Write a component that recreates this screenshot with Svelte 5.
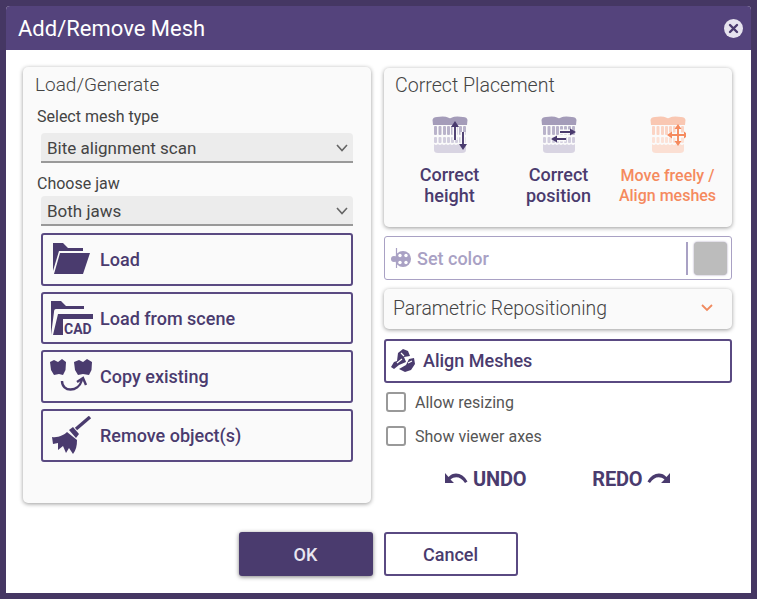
<script>
  const placements = [
    { lines: ['Correct', 'height'], kind: 'height' },
    { lines: ['Correct', 'position'], kind: 'position' },
    { lines: ['Move freely /', 'Align meshes'], kind: 'free' }
  ]
  const upperTeeth = [2, 6.500, 11, 15, 19, 23, 27, 31]
  const lowerGum = 'M2 28 Q4 30 6 28 Q8 30 10 28 Q12 30 14 28 Q16 30 18 28 Q20 30 22 28 Q24 30 26 28 Q28 30 30 28 Q32 30 34 28 L34 34 Q34 37 30 37 L6 37 Q2 37 2 34 Z'
  const arrows = {
    height: 'M23 24 V9 M31 16 V30',
    position: 'M19 16 H31 M25 23 H14',
    free: 'M19 19 H37 M28 10 V28'
  }
  const heads = {
    height: 'M23 5 L27 11 H19 Z M31 34 L27 28 H35 Z',
    position: 'M35 16 L29 12.500 V19.500 Z M10 23 L16 19.500 V26.500 Z',
    free: 'M28 8 L31.500 13 H24.500 Z M28 30 L31.500 25 H24.500 Z M17 19 L22 15.500 V22.500 Z M39 19 L34 15.500 V22.500 Z'
  }
</script>

{#snippet teeth(kind)}
  <svg class="teeth {kind}" width="36" height="38" viewBox="0 0 36 38">
    <path class="gum-top" d="M1 9 L0.500 4 Q1 1 5 1 Q13 0 16 1.500 Q18 3 20 1.500 Q23 0 31 1 Q35 1 35.500 4 L35 9 Z" />
    {#each upperTeeth as x}
      <rect class="tooth-top" {x} y="10" width="3" height="9" rx="1" />
      <rect class="tooth-low" {x} y="21" width="3" height="6" rx="1" />
    {/each}
    <path class="gum-low" d={lowerGum} />
    <path class="halo" d={arrows[kind]} />
    <path class="arrow" d={arrows[kind]} />
    <path class="head" d={heads[kind]} />
  </svg>
{/snippet}

<div class="dialog">
  <header class="title-bar">
    <h1>Add/Remove Mesh</h1>
    <button class="close" aria-label="Close">
      <svg width="19" height="19" viewBox="0 0 19 19">
        <circle cx="9.500" cy="9.500" r="9.500" fill="#e6e3ee" />
        <path d="M6 6 L13 13 M13 6 L6 13" stroke="#4a3b6e" stroke-width="2.400" stroke-linecap="round" />
      </svg>
    </button>
  </header>

  <div class="body">
    <div class="columns">
      <section class="card left">
        <h2>Load/Generate</h2>
        <div class="label first">Select mesh type</div>
        <div class="select">
          Bite alignment scan
          <svg width="12" height="8" viewBox="0 0 12 8"><path d="M1 1 L6 6.500 L11 1" fill="none" stroke="#666" stroke-width="1.600" /></svg>
        </div>
        <div class="label second">Choose jaw</div>
        <div class="select">
          Both jaws
          <svg width="12" height="8" viewBox="0 0 12 8"><path d="M1 1 L6 6.500 L11 1" fill="none" stroke="#666" stroke-width="1.600" /></svg>
        </div>

        <div class="actions">
          <button class="action">
            <span class="action-icon">
              <svg width="38" height="32" viewBox="0 0 38 32">
                <path d="M0 0 H10 L15 5 H30 V8 H6 L0 28 Z" fill="#4a3b6e" />
                <path d="M1 31 L7 10 H37 L30 31 Z" fill="#4a3b6e" />
              </svg>
            </span>
            Load
          </button>
          <button class="action">
            <span class="action-icon">
              <svg width="42" height="35" viewBox="0 0 42 35">
                <path d="M0 0 H10 L15 5 H33 V8 H5 Q3 8 3 11 L0 34 Z" fill="#4a3b6e" />
                <path d="M2 34 L7 13 H42 V18 H12 L12 34 Z" fill="#4a3b6e" />
                <text x="13" y="33" class="cad">CAD</text>
              </svg>
            </span>
            Load from scene
          </button>
          <button class="action">
            <span class="action-icon">
              <svg width="43" height="35" viewBox="0 0 43 35">
                <path d="M0 3 L4 1 L8 3 L12 0 L16 3 L15.500 11 L13 16 L9 15 L4 16 L1 11 Z" fill="#4a3b6e" />
                <path d="M24 3 L29 1 L33 3 L37 0 L42 3 L41.500 11 L39 16 L33 15 L28 16 L25 11 Z" fill="#4a3b6e" />
                <path d="M12 22 C12 33 28 34 32 21" fill="none" stroke="#4a3b6e" stroke-width="2.400" />
                <path d="M27 23 L33 19 L36 26" fill="none" stroke="#4a3b6e" stroke-width="2.400" />
              </svg>
            </span>
            Copy existing
          </button>
          <button class="action">
            <span class="action-icon">
              <svg width="40" height="38" viewBox="0 0 40 38">
                <path d="M24 13 L38 1" stroke="#4a3b6e" stroke-width="3.400" />
                <path d="M17 14 L21 11 L27 18 L24 22 Z" fill="#4a3b6e" />
                <path d="M15 16 L25 24 C25 30 24 34 21 38 L17 32 L14 37 L11 30 L6 34 L6 27 L1 28 L0 21 C6 22 12 19 15 16 Z" fill="#4a3b6e" />
              </svg>
            </span>
            Remove object(s)
          </button>
        </div>
      </section>

      <div class="right">
        <section class="card placement">
          <h2>Correct Placement</h2>
          <div class="modes">
            {#each placements as p}
              <button class="mode {p.kind}">
                {@render teeth(p.kind)}
                <span>{p.lines[0]}<br />{p.lines[1]}</span>
              </button>
            {/each}
          </div>
        </section>

        <div class="set-color">
          <svg width="20" height="22" viewBox="0 0 20 22">
            <path d="M5.500 1 V21" stroke="#a9a1c4" stroke-width="1.200" />
            <circle cx="12" cy="12" r="8" fill="#a9a1c4" />
            <circle cx="3" cy="12" r="3" fill="#a9a1c4" />
            <circle cx="9" cy="8.500" r="1.700" fill="#fff" />
            <circle cx="15" cy="8.500" r="1.700" fill="#fff" />
            <circle cx="9" cy="15.500" r="1.700" fill="#fff" />
            <circle cx="15" cy="15.500" r="1.700" fill="#fff" />
          </svg>
          <span>Set color</span>
          <div class="divider"></div>
          <div class="swatch"></div>
        </div>

        <div class="card parametric">
          <span>Parametric Repositioning</span>
          <svg width="12" height="8" viewBox="0 0 12 8"><path d="M1 1 L6 6 L11 1" fill="none" stroke="#f08a5f" stroke-width="1.800" /></svg>
        </div>

        <button class="action align">
          <svg width="24" height="24" viewBox="0 0 24 24">
            <path d="M0 19 L3 14 L6 13 L7 5 L12 1 L17 3 L19 8 L13 9 L15 14 L8 17 L3 21 Z" fill="#4a3b6e" />
            <path d="M8 21 L15 17 L18 11 L23 10 L24 16 L20 22 L14 24 Z" fill="#4a3b6e" />
            <path d="M10 5 L13 8 M6 15 L11 11 M17 15 L21 13" stroke="#fff" stroke-width="1.200" />
          </svg>
          Align Meshes
        </button>

        <label class="check resize"><input type="checkbox" /><span class="box"></span>Allow resizing</label>
        <label class="check axes"><input type="checkbox" /><span class="box"></span>Show viewer axes</label>

        <div class="history">
          <button class="link">
            <svg width="24" height="14" viewBox="0 0 24 14"><path d="M1 1 V11 H10 L6.500 7.500 C11 3.500 17 4.500 21 11 L23.500 9.500 C19 1 10 -1 4.500 5 Z" fill="#4a3b6e" /></svg>
            UNDO
          </button>
          <button class="link">
            REDO
            <svg width="24" height="14" viewBox="0 0 24 14"><path d="M23 1 V11 H14 L17.500 7.500 C13 3.500 7 4.500 3 11 L0.500 9.500 C5 1 14 -1 19.500 5 Z" fill="#4a3b6e" /></svg>
          </button>
        </div>
      </div>
    </div>

    <footer class="footer">
      <button class="btn ok">OK</button>
      <button class="btn cancel">Cancel</button>
    </footer>
  </div>
</div>

<style>
  :global(body) {
    margin: 0;
    background: #453763;
    font-family: Roboto, sans-serif;
  }

  button {
    font-family: inherit;
    cursor: pointer;
  }

  .dialog {
    width: 745px;
    height: 587px;
    margin: 6px 0 0 6px;
    display: flex;
    flex-direction: column;
    background: #fff;
    border-radius: 4px 4px 0 0;
    overflow: hidden;
  }

  .title-bar {
    height: 44px;
    flex: none;
    display: flex;
    align-items: center;
    justify-content: space-between;
    padding: 0 8px 0 12px;
    background: #54437c;
    color: #fff;
  }

  h1 {
    margin: 0;
    font-size: 22px;
    font-weight: 400;
  }

  .close {
    display: flex;
    padding: 0;
    border: none;
    background: none;
  }

  .body {
    flex: 1;
    padding: 17px 19px 0 17px;
    display: flex;
    flex-direction: column;
  }

  .columns {
    display: flex;
    gap: 13px;
    height: 436px;
  }

  .card {
    background: #fafafa;
    border-radius: 5px;
    box-shadow: 0 1px 4px rgba(0, 0, 0, 0.4);
    box-sizing: border-box;
  }

  h2 {
    margin: 0;
    font-size: 19px;
    line-height: 24px;
    font-weight: 300;
    color: #444;
  }

  .left {
    width: 348px;
    padding: 6px 18px 0 12px;
  }

  .label {
    font-size: 16px;
    line-height: 20px;
    color: #444;
    margin-left: 2px;
  }

  .label.first {
    margin-top: 10px;
    margin-bottom: 6px;
  }

  .label.second {
    margin-top: 11px;
    margin-bottom: 2px;
  }

  .select {
    height: 30px;
    margin-left: 6px;
    padding: 2px 5px 0 6px;
    display: flex;
    align-items: center;
    justify-content: space-between;
    box-sizing: border-box;
    background: #ececec;
    border-radius: 4px 4px 0 0;
    border-bottom: 2px solid #999;
    font-size: 17px;
    color: #444;
  }

  .actions {
    margin: 7px 0 0 6px;
    display: flex;
    flex-direction: column;
    gap: 6px;
  }

  .action {
    display: flex;
    align-items: center;
    box-sizing: border-box;
    height: 52.700px;
    padding: 0;
    background: #fafafa;
    border: 2px solid #5a4a82;
    border-radius: 3px;
    color: #4a3b6e;
    font-size: 18px;
    font-weight: 500;
  }

  .action-icon {
    width: 57px;
    display: flex;
    justify-content: center;
    flex: none;
  }

  .cad {
    font-family: Roboto, sans-serif;
    font-size: 14px;
    font-weight: 700;
    fill: #4a3b6e;
  }

  .right {
    width: 348px;
    display: flex;
    flex-direction: column;
  }

  .placement {
    height: 159px;
    padding: 6px 11px 0;
    margin-top: 1px;
  }

  .placement h2 {
    font-size: 19.600px;
  }

  .modes {
    display: flex;
    margin: 18px -11px 0 -11px;
    padding-left: 11px;
  }

  .mode {
    width: 109px;
    padding: 0;
    border: none;
    background: none;
    display: flex;
    flex-direction: column;
    align-items: center;
    gap: 10px;
    color: #4a3b6e;
    font-size: 18px;
    line-height: 21px;
    font-weight: 500;
  }

  .mode.free {
    color: #f58a5e;
    font-size: 16px;
    line-height: 19.500px;
  }

  .mode.free span {
    margin-top: 2px;
  }

  .teeth .gum-top { fill: #a49cb9; }
  .teeth .tooth-top { fill: #b9b3ca; }
  .teeth .tooth-low { fill: #d2cede; }
  .teeth .gum-low { fill: #d8d4e2; }
  .teeth .halo { fill: none; stroke: #fafafa; stroke-width: 5; }
  .teeth .arrow { fill: none; stroke: #4a3b6e; stroke-width: 1.900; }
  .teeth .head { fill: #4a3b6e; }

  .teeth.free .gum-top { fill: #f9c7b2; }
  .teeth.free .tooth-top { fill: #fbd4c4; }
  .teeth.free .tooth-low { fill: #fce2d7; }
  .teeth.free .gum-low { fill: #fbdfd3; }
  .teeth.free .arrow { stroke: #f58a5e; }
  .teeth.free .head { fill: #f58a5e; }

  .set-color {
    height: 44px;
    margin-top: 9px;
    box-sizing: border-box;
    display: flex;
    align-items: center;
    padding: 0 4px 0 6px;
    border: 1px solid #a9a1c4;
    border-radius: 3px;
    color: #a9a1c4;
    font-size: 18px;
    font-weight: 500;
  }

  .set-color span {
    margin-left: 6px;
    flex: 1;
  }

  .divider {
    width: 2px;
    height: 33px;
    background: #a9a1c4;
    margin-right: 6px;
  }

  .swatch {
    width: 33px;
    height: 33px;
    border-radius: 4px;
    background: #bcbcbc;
    box-shadow: 0 0 2px rgba(84, 67, 124, 0.6);
  }

  .parametric {
    height: 40px;
    margin-top: 9px;
    padding: 0 19px 2px 9px;
    display: flex;
    align-items: center;
    justify-content: space-between;
    font-size: 19.400px;
    font-weight: 300;
    color: #444;
  }

  .align {
    height: 44px;
    margin-top: 10px;
    padding: 0 0 2px 5px;
    gap: 8px;
    background: #fff;
  }

  .check {
    display: flex;
    align-items: center;
    height: 20px;
    font-size: 16px;
    color: #555;
  }

  .check.resize { margin-top: 9px; }
  .check.axes { margin-top: 14px; }

  .check input {
    display: none;
  }

  .box {
    width: 20px;
    height: 20px;
    box-sizing: border-box;
    margin: 0 9px 0 2px;
    background: #fff;
    border: 2px solid #999;
    border-radius: 3px;
  }

  .history {
    display: flex;
    gap: 66px;
    margin: 21px 0 0 60px;
  }

  .link {
    display: flex;
    align-items: center;
    gap: 5px;
    padding: 0;
    border: none;
    background: none;
    color: #4a3b6e;
    font-size: 20px;
    font-weight: 700;
    letter-spacing: -0.200px;
  }

  .footer {
    display: flex;
    justify-content: center;
    gap: 11px;
    margin-top: 29px;
    padding-left: 1px;
  }

  .btn {
    width: 134px;
    height: 44px;
    box-sizing: border-box;
    border-radius: 3px;
    font-size: 18px;
    font-weight: 500;
  }

  .ok {
    background: #4a3b6e;
    border: none;
    color: #e9e6f0;
    box-shadow: 0 1px 4px rgba(0, 0, 0, 0.5);
  }

  .cancel {
    background: #fff;
    border: 2px solid #5a4a82;
    color: #4a3b6e;
  }
</style>
